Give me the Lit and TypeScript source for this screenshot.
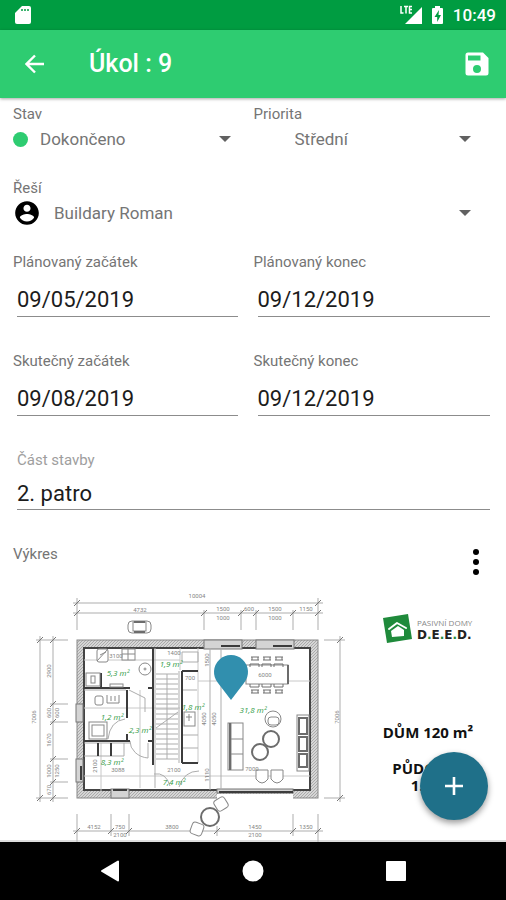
import { LitElement, html, svg, css } from "lit";
import { customElement } from "lit/decorators.js";

type Seg = [number, number, number, number];
type Label = [number, number, string];

const segs = (list: Seg[]) =>
  svg`<path d=${list.map(([a, b, c, d]) => `M${a} ${b}L${c} ${d}`).join("")} />`;

const labels = (list: Label[], rotated = false) =>
  list.map(
    ([x, y, t]) =>
      svg`<text x=${x} y=${y} transform=${rotated ? `rotate(-90 ${x} ${y})` : "rotate(0)"}>${t}</text>`
  );

/** Slanted tick marks of a dimension line. */
const ticks = (list: [number, number][]) =>
  segs(list.map(([x, y]) => [x - 3, y + 3, x + 3, y - 3] as Seg));

@customElement("floor-plan")
export class FloorPlan extends LitElement {
  static styles = css`
    :host { display: block; }
    svg { display: block; width: 100%; height: auto; }
    .thin { stroke: #adadad; stroke-width: 1; fill: none; }
    .faint { stroke: #c8c8c8; stroke-width: 1; fill: none; }
    .mid { stroke: #6f6f6f; stroke-width: 1; fill: none; }
    .tick { stroke: #777; stroke-width: 1; fill: none; }
    .wall { stroke: #3c3c3c; stroke-width: 2; fill: none; }
    .shell { fill: url(#hatch); stroke: #888; stroke-width: 1; }
    .inner { fill: #fff; stroke: #444; stroke-width: 2; }
    .opening { fill: #d4d4d4; stroke: #777; stroke-width: 1; }
    .furn { fill: #fff; stroke: #888; stroke-width: 1; }
    .bold { fill: #fff; stroke: #6c6c6c; stroke-width: 2; }
    .dim { font: 6px Roboto, sans-serif; fill: #858585; text-anchor: middle; }
    .area { font: italic 8px "Open Sans", sans-serif; fill: #2f9a3f; text-anchor: middle; }
    .pin { fill: #318fae; }
    .brand { fill: #1f8a3b; }
    .roof { fill: none; stroke: #fff; stroke-width: 2; stroke-linejoin: round; stroke-linecap: round; }
    .house { fill: #fff; }
    .tag { font: 8px "Open Sans", sans-serif; fill: #888; }
    .name { font: bold 12px "DejaVu Sans", sans-serif; fill: #222; }
    .dot { fill: #1f8a3b; }
    .caption { font: bold 15px "Open Sans", sans-serif; fill: #111; text-anchor: middle; }
    .edge { stroke: #bbb; stroke-width: 1; }
  `;

  private dimensions() {
    return svg`
      <g class="thin">
        ${segs([
          [73, 603, 323, 603], [73, 613, 323, 613], [77, 598, 77, 630], [318, 598, 318, 630],
          [204, 610, 204, 630], [241, 610, 241, 630], [256, 610, 256, 630], [293, 610, 293, 630],
          [40, 636, 40, 802], [53, 636, 53, 802], [36, 640, 68, 640], [50, 704, 68, 704],
          [50, 722, 68, 722], [50, 759, 68, 759], [50, 782, 68, 782], [36, 798, 68, 798],
          [340, 636, 340, 802], [324, 640, 345, 640], [324, 798, 345, 798],
          [73, 831, 323, 831], [77, 814, 77, 842], [111, 814, 111, 836], [129, 814, 129, 836],
          [217, 826, 217, 836], [293, 814, 293, 836], [318, 814, 318, 842],
        ])}
      </g>
      <g class="tick">
        ${ticks([
          [77, 603], [318, 603], [77, 613], [204, 613], [241, 613], [256, 613], [293, 613], [318, 613],
          [40, 640], [53, 640], [53, 704], [53, 722], [53, 759], [53, 782], [53, 798], [40, 798],
          [340, 640], [340, 798], [77, 831], [111, 831], [129, 831], [217, 831], [293, 831], [318, 831],
        ])}
      </g>
      <g class="dim">
        ${labels([
          [197, 598, "10004"], [140, 612, "4732"], [223, 611, "1500"], [223, 620, "1000"], [249, 611, "600"],
          [275, 611, "1500"], [275, 620, "1000"], [306, 611, "1150"], [94, 829, "4152"], [120, 829, "750"],
          [120, 837, "2100"], [172, 829, "3800"], [255, 829, "1450"], [255, 837, "2100"], [306, 829, "1350"],
        ])}
        ${labels([
          [36, 717, "7006"], [51, 671, "2900"], [51, 713, "600"], [59, 713, "600"], [51, 740, "1670"],
          [51, 771, "1000"], [59, 771, "1250"], [51, 790, "670"], [339, 717, "7006"],
        ], true)}
      </g>`;
  }

  private structure() {
    return svg`
      <rect class="shell" x="77" y="640" width="241" height="158" />
      <rect class="inner" x="84" y="648" width="226" height="142" />
      <g class="opening">
        <rect x="204" y="640" width="38" height="9" />
        <rect x="256" y="640" width="38" height="9" />
        <rect x="76" y="704" width="7" height="18" />
        <rect x="76" y="759" width="7" height="23" />
        <rect x="111" y="789" width="18" height="9" />
        <rect x="217" y="789" width="76" height="4" />
      </g>
      <rect class="house" x="217" y="794" width="76" height="5" />
      <g class="faint">
        ${segs([
          [84, 776, 310, 776], [198, 681, 310, 681], [101, 743, 101, 797], [84, 708, 180, 708],
          [84, 660, 180, 660], [140, 690, 140, 788], [198, 648, 198, 763], [180, 648, 180, 670],
        ])}
      </g>
      <g class="thin">
        ${segs([
          [210, 648, 210, 790], [221, 648, 221, 790], [84, 690, 126, 690], [84, 743, 130, 743],
          [155, 648, 155, 788], [179, 671, 179, 763], [84, 756, 124, 756], [124, 743, 124, 756],
          ...Array.from({ length: 18 }, (_, i): Seg => [156, 674 + i * 5, 178, 674 + i * 5]),
          [183, 735, 198, 735], [183, 748, 198, 748], [167, 674, 167, 759], [156, 728, 178, 712],
        ])}
        <path d="M130 741a20 17 0 0 0 18 17v-15M108 739q2-18 17-20M154 774q12-2 16 12M179 787q5-16 20-16M182 652h16v10h-16zM183 690h14M129 690l16 8v14" />
      </g>
      <g class="wall">
        ${segs([
          [153, 648, 153, 765], [84, 688, 130, 688], [148, 688, 153, 688], [127, 690, 127, 718],
          [127, 734, 127, 741], [84, 741, 130, 741], [148, 741, 153, 741], [101, 673, 101, 687],
          [182, 671, 182, 763], [182, 671, 198, 671], [182, 763, 198, 763], [98, 743, 98, 756],
          [111, 743, 111, 756], [81, 766, 81, 780], [221, 646, 240, 646], [273, 646, 292, 646],
          [219, 792, 293, 792], [113, 790, 127, 790],
        ])}
      </g>`;
  }

  private furniture() {
    return svg`
      <g class="furn">
        <rect x="128" y="621" width="23" height="12" rx="4" />
        <rect x="133" y="622" width="13" height="9" />
        <rect x="97" y="649" width="11" height="13" rx="2" />
        <path d="M97 661L108 649M100 655l6-3" />
        <rect x="122" y="649" width="13" height="11" />
        <path d="M122 654h13M128 649v11" />
        <rect x="86" y="673" width="14" height="13" />
        <rect x="91" y="676" width="4" height="7" />
        <circle cx="145" cy="669" r="6" />
        <circle cx="145" cy="669" r="1" />
        <rect x="110" y="684" width="13" height="3" />
        <rect x="95" y="696" width="8" height="9" rx="2" />
        <path d="M107 695v8h12v-8M111 696v5M115 696v5" />
        <rect x="89" y="722" width="18" height="17" />
        <rect x="92" y="725" width="12" height="11" />
        <rect x="184" y="712" width="11" height="14" />
        <path d="M186 717h6M189 714v7" />
        <rect x="246" y="665" width="42" height="19" />
        <rect x="228" y="723" width="15" height="47" />
        <path d="M231 723v47M231 739h12M231 754h12" />
        <circle cx="273" cy="719" r="8" />
        <rect x="268" y="717" width="11" height="8" rx="3" />
        <rect x="297" y="715" width="12" height="56" />
        <path d="M256 770h12v9q-6 8-12 0zM271 770h12v9q-6 8-12 0z" />
        <rect x="215" y="798" width="12" height="12" rx="3" transform="rotate(-32 221 804)" />
        <rect x="191" y="823" width="12" height="12" rx="3" transform="rotate(20 197 829)" />
      </g>
      <g class="mid">
        ${[255, 267, 279].map(
          (x) => svg`<path d="M${x - 4} 657h8m-8 3h8m-7-3v3m6-3v3M${x - 5} 667v-3h9v3M${x - 5} 684v3h9v-3M${x - 4} 690h8m-8 3h8m-7-3v3m6-3v3" />`
        )}
      </g>
      <g class="bold">
        <circle cx="271" cy="739" r="8" />
        <circle cx="260" cy="752" r="8" />
        <circle cx="210" cy="817" r="9" />
        <path d="M134 622h11M134 632h11M288 665v19M230 723v47M299 718h8v16h-8zM299 737h8v14h-8zM299 754h8v13h-8z" />
      </g>`;
  }

  render() {
    return html`
      <svg viewBox="0 580 506 262" role="img" aria-label="Výkres">
        <defs>
          <pattern id="hatch" width="3" height="3" patternUnits="userSpaceOnUse">
            <rect width="3" height="3" fill="#d6d6d6" />
            <path d="M0 3L3 0" stroke="#aaa" stroke-width="1" />
          </pattern>
        </defs>
        ${this.dimensions()} ${this.structure()} ${this.furniture()}
        <g class="dim">
          ${labels([
            [118, 772, "3088"], [174, 772, "2100"], [252, 771, "7000"], [265, 677, "6000"],
            [116, 658, "3100"], [190, 680, "700"], [174, 655, "1400"],
          ])}
          ${labels([
            [97, 766, "2100"], [206, 719, "4050"], [216, 719, "4050"], [209, 660, "1500"], [209, 775, "1110"],
          ], true)}
        </g>
        <g class="area">
          ${labels([
            [118, 676, "5,3 m²"], [171, 667, "1,9 m²"], [112, 720, "1,2 m²"], [140, 733, "2,3 m²"],
            [112, 765, "8,3 m²"], [193, 710, "1,8 m²"], [253, 713, "31,8 m²"], [174, 785, "7,4 m²"],
          ])}
        </g>
        <path class="pin" d="M231 700L218 683A17 17 0 1 1 244 683Z" />
        <path class="brand" d="M383 618L408 614L412 639L387 643Z" />
        <path class="roof" d="M389 629L397 623L406 628" />
        <path class="house" d="M391 631L398 626L404 630V636L392 637Z" />
        <text class="tag" x="417" y="626">PASIVNÍ DOMY</text>
        <text class="name" x="417" y="639">D<tspan class="dot">.</tspan>E<tspan class="dot">.</tspan>E<tspan class="dot">.</tspan>D.</text>
        <text class="caption" x="428" y="738">DŮM 120 m²</text>
        <text class="caption"><tspan x="428" y="774">PŮDORYS</tspan><tspan x="428" y="791">1.NP</tspan></text>
        <path class="edge" d="M0 841H506" />
      </svg>
    `;
  }
}

@customElement("app-root")
export class AppRoot extends LitElement {
  static styles = css`
    :host {
      display: flex;
      flex-direction: column;
      min-height: 100vh;
      background: #fff;
      font-family: Roboto, "Noto Sans", sans-serif;
      color: #757575;
    }
    * { box-sizing: border-box; }
    button, input, select { font: inherit; color: inherit; border: 0; background: none; margin: 0; padding: 0; border-radius: 0; }
    button { display: flex; align-items: center; justify-content: center; cursor: pointer; }
    svg { display: block; flex: none; }
    .status {
      display: flex; align-items: center; height: 30px; padding: 0 10px 0 15px;
      background: #009c41; color: #fff; font-size: 17px; font-weight: 500;
    }
    .status .sys { display: flex; align-items: center; margin-left: auto; }
    .clock { margin-left: 9px; line-height: 30px; }
    .bar {
      display: flex; align-items: center; height: 68px; padding: 0 13px 0 19px;
      background: #2ecc71; color: #fff; box-shadow: 0 1px 3px rgba(0, 0, 0, 0.35); z-index: 1;
    }
    .back, .save { width: 32px; height: 48px; }
    .title { flex: 1; margin: 0; padding-left: 38px; font-size: 25px; font-weight: 500; line-height: 32px; }
    .form { display: grid; grid-template-columns: repeat(2, minmax(0, 1fr)); row-gap: 24px; padding: 6px 12px 0 13px; }
    .wide { grid-column: 1 / -1; }
    .label { display: block; font-size: 15px; line-height: 20px; }
    .pick { display: flex; align-items: center; height: 30px; padding-right: 23px; }
    .pick select { flex: 1; min-width: 0; height: 30px; appearance: none; font-size: 17px; }
    .state { width: 15px; height: 15px; margin-right: 12px; border-radius: 50%; background: #2ecc71; }
    .none { width: 41px; }
    .avatar { margin: 0 14px 0 1px; }
    .dates { row-gap: 34px; padding-top: 24px; }
    .date { display: flex; flex-direction: column; }
    .line {
      margin: 0 4px; padding-top: 10px; height: 45px; min-width: 0;
      border-bottom: 1px solid #8c8c8c; color: #1c1c1c; font-size: 22px; outline: none;
    }
    .date.start .line { margin-right: 16px; }
    .part .line { height: 40px; padding-top: 8px; }
    .part .label { margin-left: 4px; color: #9e9e9e; }
    .head { display: flex; justify-content: space-between; align-items: flex-start; height: 36px; padding: 0 14px 0 13px; margin-top: 34px; }
    .head h2 { margin: 0; font-weight: 400; }
    .more { width: 32px; height: 36px; }
    .drawing { position: relative; }
    .fab {
      position: absolute; right: 18px; bottom: 22px; width: 68px; height: 68px; border-radius: 50%;
      background: #1f7089; box-shadow: 0 3px 6px rgba(0, 0, 0, 0.4);
    }
    .nav { display: flex; height: 58px; margin-top: auto; padding: 0 39px; background: #000; }
    .nav button { flex: 1; }
  `;

  private arrow() {
    return html`<svg width="12" height="6" viewBox="0 0 12 6" aria-hidden="true"><path d="M0 0H12L6 6Z" fill="#616161" /></svg>`;
  }

  private date(id: string, label: string, value: string, start: boolean) {
    return html`
      <div class="date ${start ? "start" : ""}">
        <label class="label" for=${id}>${label}</label>
        <input class="line" id=${id} .value=${value} />
      </div>`;
  }

  render() {
    return html`
      <div class="status">
        <svg width="17" height="20" viewBox="0 0 17 20"><path d="M7 1H14Q16 1 16 3V17Q16 19 14 19H2Q0 19 0 17V8Z" fill="#fff" /><path d="M7 4v2M10 4v2M13 4v2" stroke="#009c41" stroke-width="1.5" /></svg>
        <div class="sys">
          <svg width="45" height="22" viewBox="0 0 45 22">
            <path d="M23 3V20H6Z" fill="#fff" />
            <path d="M2 2V9H4M5 2.500H9M7 2.500V9.500M13 2.500H10.500V9H13M10.500 5.500H13" fill="none" stroke="#009c41" stroke-width="3" />
            <path d="M2 2V9H4.500M5 2.500H9M7 2.500V9.500M13 2.500H10.500V9H13M10.500 5.500H13" fill="none" stroke="#fff" stroke-width="1.500" />
            <path d="M34 4H36V2H41V4H43Q44 4 44 5V19Q44 20 43 20H34Q33 20 33 19V5Q33 4 34 4Z" fill="#fff" />
            <path d="M40 6L35.500 13H38.200V18L42 11H39.500Z" fill="#009c41" />
          </svg>
          <span class="clock">10:49</span>
        </div>
      </div>
      <header class="bar">
        <button class="back" aria-label="Zpět">
          <svg width="20" height="20" viewBox="0 0 20 20"><path d="M19 10H2M10 1.500L1.500 10L10 18.500" fill="none" stroke="#fff" stroke-width="2.400" /></svg>
        </button>
        <h1 class="title">Úkol : 9</h1>
        <button class="save" aria-label="Uložit">
          <svg width="24" height="24" viewBox="0 0 24 24"><path fill="#fff" fill-rule="evenodd" d="M3 0.500H18L23.500 6V21Q23.500 23.500 21 23.500H3Q0.500 23.500 0.500 21V3Q0.500 0.500 3 0.500ZM3 3.500V8.500H15.500V3.500ZM12 13A4 4 0 1 0 12 21A4 4 0 1 0 12 13Z" /></svg>
        </button>
      </header>
      <main>
        <div class="form">
          <div>
            <label class="label" for="state">Stav</label>
            <div class="pick">
              <span class="state"></span>
              <select id="state"><option>Dokončeno</option></select>
              ${this.arrow()}
            </div>
          </div>
          <div>
            <label class="label" for="priority">Priorita</label>
            <div class="pick">
              <span class="none"></span>
              <select id="priority"><option>Střední</option></select>
              ${this.arrow()}
            </div>
          </div>
          <div class="wide">
            <label class="label" for="solver">Řeší</label>
            <div class="pick">
              <svg class="avatar" width="26" height="26" viewBox="1 1 22 22"><path d="M12 2C6.480 2 2 6.480 2 12s4.480 10 10 10 10-4.480 10-10S17.520 2 12 2zm0 3c1.660 0 3 1.340 3 3s-1.340 3-3 3-3-1.340-3-3 1.340-3 3-3zm0 14.200c-2.500 0-4.710-1.280-6-3.220.030-1.990 4-3.080 6-3.080 1.990 0 5.970 1.090 6 3.080-1.290 1.940-3.500 3.220-6 3.220z" fill="#000" /></svg>
              <select id="solver"><option>Buildary Roman</option></select>
              ${this.arrow()}
            </div>
          </div>
        </div>
        <div class="form dates">
          ${this.date("plan-start", "Plánovaný začátek", "09/05/2019", true)}
          ${this.date("plan-end", "Plánovaný konec", "09/12/2019", false)}
          ${this.date("real-start", "Skutečný začátek", "09/08/2019", true)}
          ${this.date("real-end", "Skutečný konec", "09/12/2019", false)}
          <div class="date part wide">
            <label class="label" for="part">Část stavby</label>
            <input class="line" id="part" .value=${"2. patro"} />
          </div>
        </div>
        <div class="head">
          <h2 class="label">Výkres</h2>
          <button class="more" aria-label="Další možnosti">
            <svg width="8" height="28" viewBox="0 0 8 28"><circle cx="4" cy="4" r="3" /><circle cx="4" cy="14" r="3" /><circle cx="4" cy="24" r="3" /></svg>
          </button>
        </div>
        <div class="drawing">
          <floor-plan></floor-plan>
          <button class="fab" aria-label="Přidat">
            <svg width="18" height="18" viewBox="0 0 18 18"><path d="M9 0V18M0 9H18" stroke="#fff" stroke-width="2.600" /></svg>
          </button>
        </div>
      </main>
      <nav class="nav">
        <button aria-label="Zpět"><svg width="20" height="22" viewBox="0 0 20 22"><path d="M18 1.500V20.500L2 11Z" fill="#fff" stroke="#fff" stroke-width="2" stroke-linejoin="round" /></svg></button>
        <button aria-label="Domů"><svg width="22" height="22" viewBox="0 0 22 22"><circle cx="11" cy="11" r="10.500" fill="#fff" /></svg></button>
        <button aria-label="Přehled"><svg width="20" height="20" viewBox="0 0 20 20"><rect width="20" height="20" rx="1" fill="#fff" /></svg></button>
      </nav>
    `;
  }
}
